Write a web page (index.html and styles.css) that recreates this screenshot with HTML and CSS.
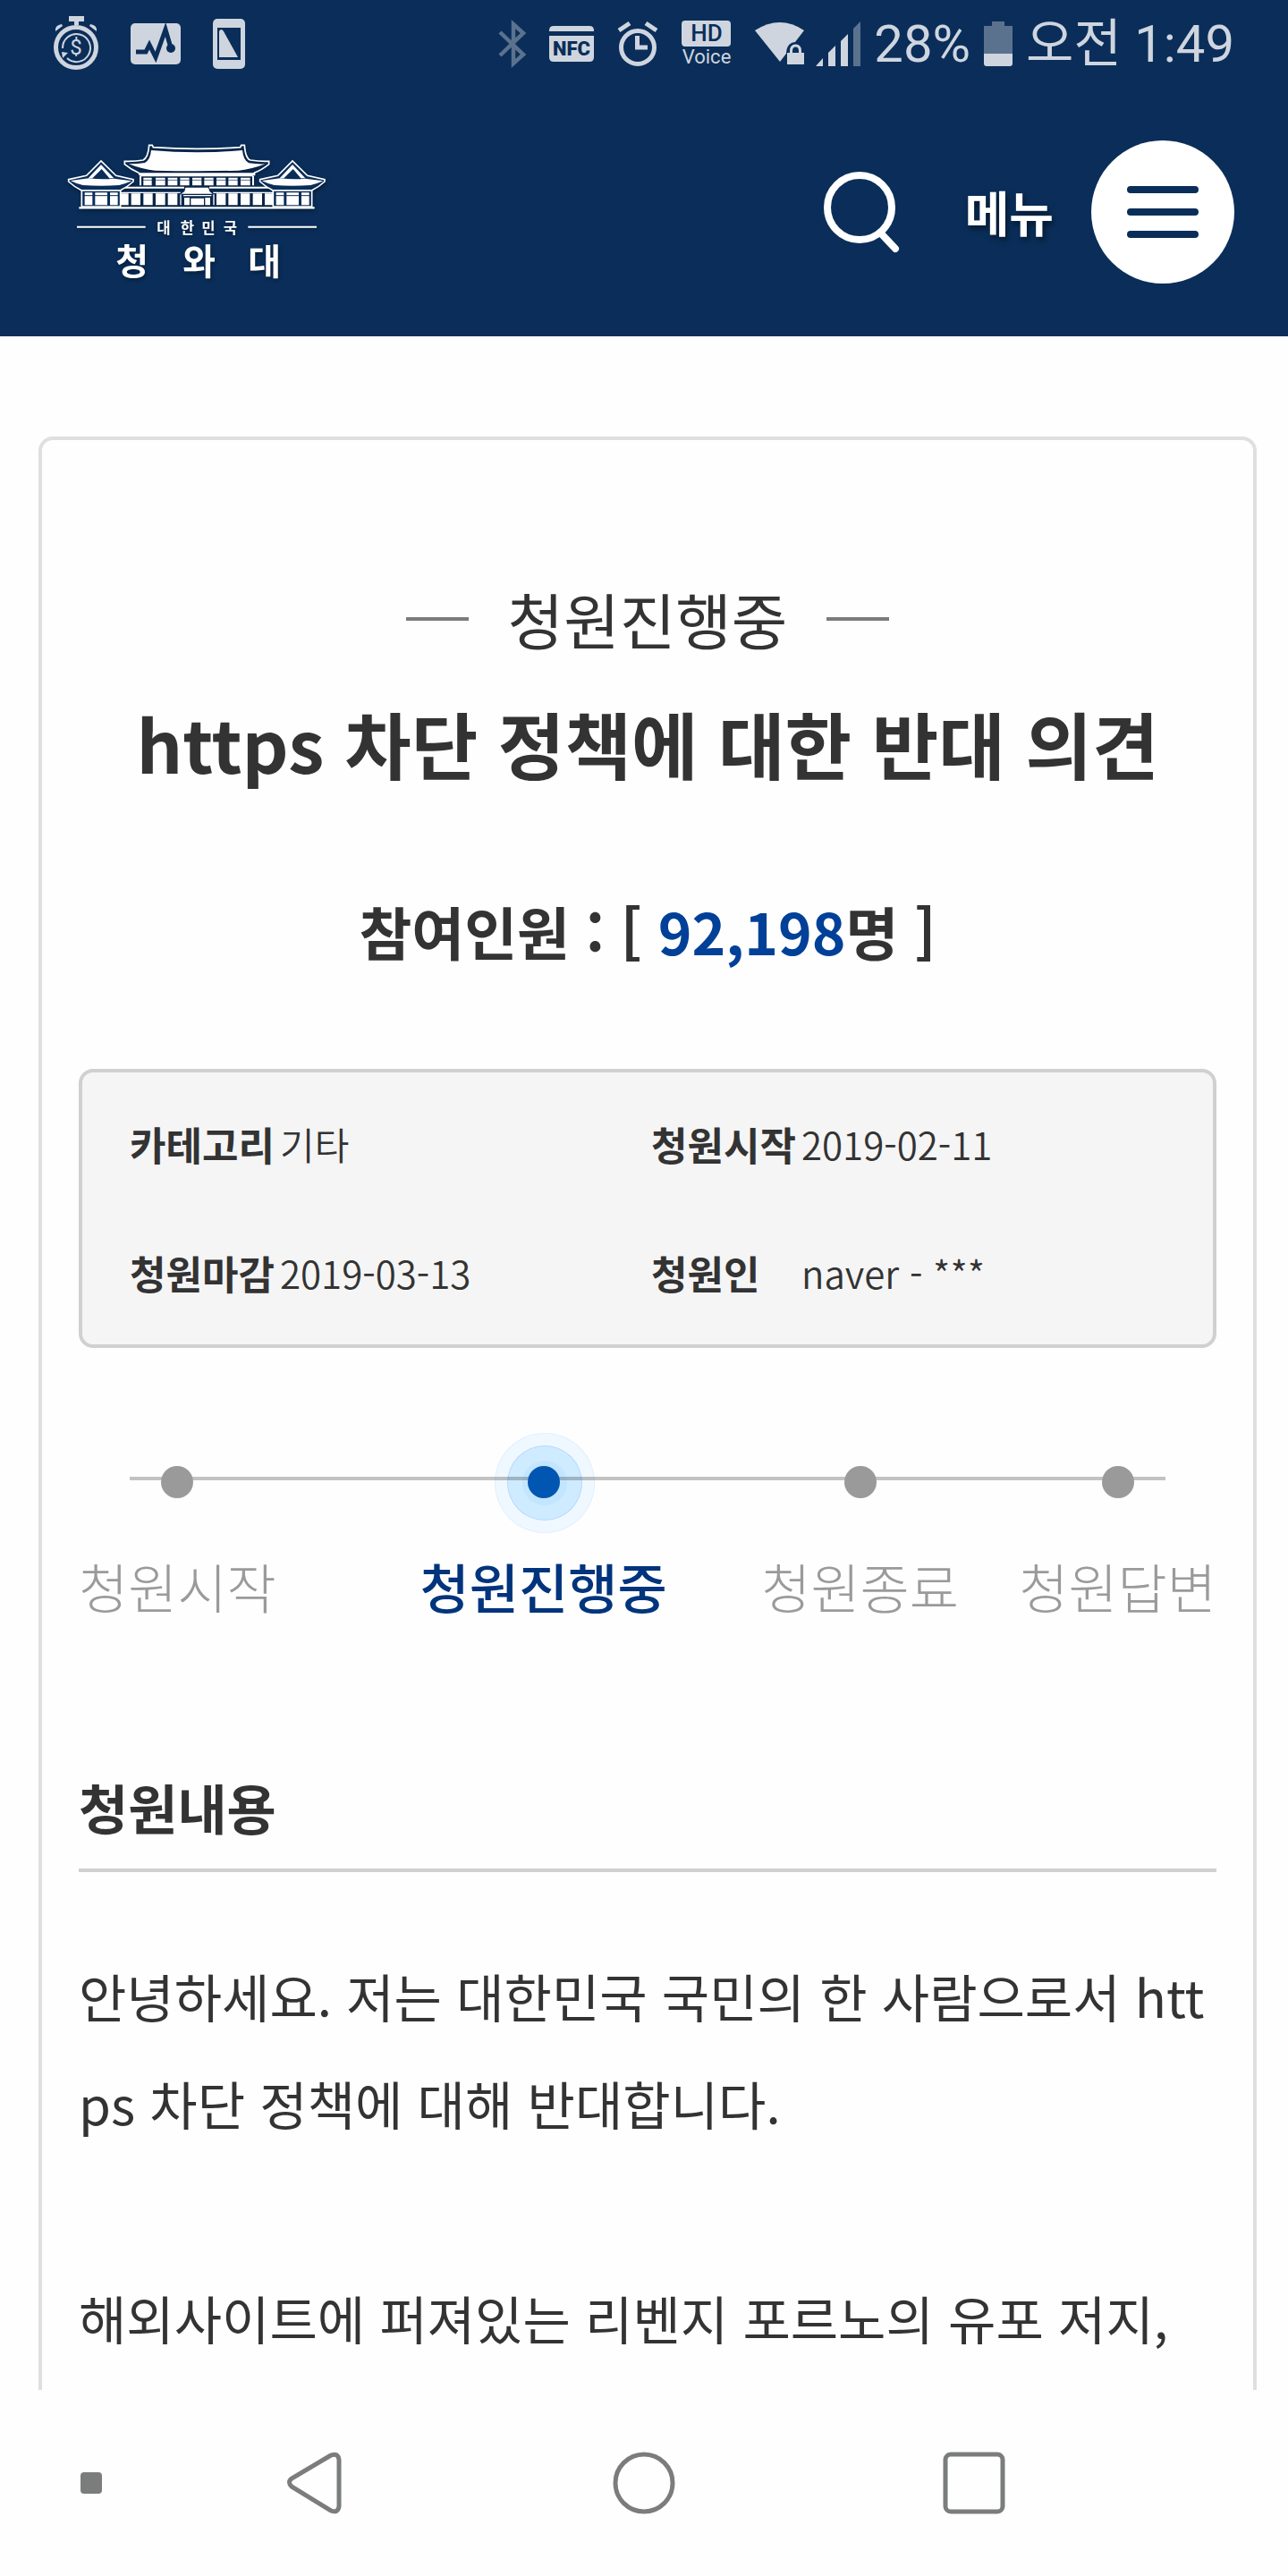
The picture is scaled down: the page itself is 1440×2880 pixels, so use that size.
FILE: index.html
```html
<!DOCTYPE html>
<html lang="ko">
<head>
    <meta charset="UTF-8">
    <meta name="viewport" content="width=device-width, initial-scale=1.0">
    <title>https 차단 정책에 대한 반대 의견</title>
    <link rel="stylesheet" href="styles.css">
</head>
<body>
    <header class="top">
        <!-- Status bar -->
        <div class="status-bar">
            <div class="status-left">
                <svg width="50" height="62" viewBox="0 0 50 62">
                    <path d="M17 0h17v6h-6v4h-5V6h-6z" fill="#cfd5df"/>
                    <path d="M2 17q-1-7 7-8l1 2zM48 17q1-7-7-8l-1 2z" fill="#cfd5df"/>
                    <circle cx="25" cy="35" r="22.500" fill="none" stroke="#cfd5df" stroke-width="5"/>
                    <path d="M10 36a15.500 15.500 0 1 1 5 11" fill="none" stroke="#cfd5df" stroke-width="2"/>
                    <path d="M9 40l7 1-6 6z" fill="#cfd5df"/>
                    <text x="25" y="43" class="coin">$</text>
                </svg>
                <svg width="56" height="46" viewBox="0 0 56 46">
                    <rect width="56" height="46" rx="5" fill="#cfd5df"/>
                    <path d="M6 32h11l4-8 7 14L39 7l5 17" fill="none" stroke="#0a2e59" stroke-width="5"/>
                    <circle cx="45" cy="28" r="5" fill="#0a2e59"/>
                </svg>
                <svg width="36" height="56" viewBox="0 0 36 56">
                    <rect width="36" height="56" rx="5" fill="#cfd5df"/>
                    <path d="M5 10h26v36H5z" fill="#0a2e59"/>
                    <path d="M7 43V14q2-4 5 0l16 29z" fill="#cfd5df"/>
                </svg>
            </div>
            <div class="status-right">
                <div class="status-icons">
                    <svg width="30" height="50" viewBox="0 0 30 50">
                        <path d="M1 12l26 25-11 10V3l11 10L1 38" fill="none" stroke="#5b728f" stroke-width="4.500"/>
                    </svg>
                    <svg width="50" height="40" viewBox="0 0 50 40">
                        <path d="M0 6V5q0-5 5-5h40q5 0 5 5v1zM0 11h50v24q0 5-5 5H5q-5 0-5-5z" fill="#cfd5df"/>
                        <text x="25" y="33" class="nfc">NFC</text>
                    </svg>
                    <svg width="46" height="50" viewBox="0 0 46 50">
                        <circle cx="23" cy="29" r="18.500" fill="none" stroke="#cfd5df" stroke-width="5"/>
                        <path d="M2 10L14 2M44 10L32 2" fill="none" stroke="#cfd5df" stroke-width="5"/>
                        <path d="M22.500 16v13H34" fill="none" stroke="#cfd5df" stroke-width="5"/>
                    </svg>
                    <svg width="56" height="60" viewBox="0 -4 56 60">
                        <rect width="55" height="29" rx="4" fill="#cfd5df"/>
                        <text x="28" y="23" class="hd">HD</text>
                        <text x="28" y="48" class="voice">Voice</text>
                    </svg>
                    <svg width="56" height="48" viewBox="0 0 56 48">
                        <path d="M0 9Q28-9 55 9L28 44z" fill="#cfd5df"/>
                        <path d="M35 48V34q1-12 11-12t11 12v14z" fill="#0a2e59"/>
                        <path d="M36 34h19v13H36z" fill="#cfd5df"/>
                        <path d="M40.500 36v-4q0-6 5-6t5 6v4" fill="none" stroke="#cfd5df" stroke-width="3"/>
                    </svg>
                </div>
                <div class="status-text">
                    <svg width="50" height="50" viewBox="0 0 50 50">
                        <path d="M0 50l8-9v9zM14 50V35l8-8v23zM28 50V22l8-8v36z" fill="#cfd5df"/>
                        <path d="M42 50V8l8-8v50z" fill="#5b728f"/>
                    </svg>
                    <span>28%</span>
                    <svg width="32" height="50" viewBox="0 0 32 50">
                        <path d="M0 5h9V0h14v5h9v32H0z" fill="#5b728f"/>
                        <path d="M0 36h32v11q0 3-3 3H3q-3 0-3-3z" fill="#cfd5df"/>
                    </svg>
                    <span>오전 1:49</span>
                </div>
            </div>
        </div>

        <!-- Site header -->
        <div class="site-header">
            <a href="#" class="logo" aria-label="대한민국 청와대">
                <svg width="290" height="165" viewBox="225 463 870 495">
                    <!-- main roof -->
                    <path d="M507 502q153 14 306 0q3 34 22 43q25 4 55 3q-50 19-90 22q-140 3-280 0q-40-3-88-22q30 0 54-4q18-10 21-42z" fill="#fff"/>
                    <path d="M500 485h11l3 7q146 10 292 0l3-7h11q3 45 20 50q30 5 62 4v10q-25 20-48 28l-8 10H474l-10-10q-24-10-46-28v-10q35 1 62-4q17-8 20-50z" fill="none" stroke="#fff" stroke-width="5"/>
                    <path d="M466 578h390v9H466z" fill="#fff"/>
                    <!-- upper windows -->
                    <path d="M471 588v32M849 588v32" stroke="#fff" stroke-width="6"/>
                    <path d="M481 594h28v26h-28zM522 594h32v26h-32zM563 594h32v26h-32zM604 594h31v26h-31zM645 594h31v26h-31zM685 594h31v26h-31zM726 594h31v26h-31zM766 594h31v26h-31zM807 594h32v26h-32z" fill="#fff"/>
                    <path d="M478 602h363" stroke="#0a2e59" stroke-width="2"/>
                    <path d="M410 627h208M702 627h208" stroke="#fff" stroke-width="6"/>
                    <!-- lower wall -->
                    <path d="M405 644h200M715 644h200" stroke="#fff" stroke-width="4"/>
                    <path d="M405 647h26v39h-26zM440 647h31v39h-31zM481 647h31v39h-31zM522 647h32v39h-32zM563 647h32v39h-32zM726 647h31v39h-31zM766 647h31v39h-31zM807 647h31v39h-31zM848 647h31v39h-31zM888 647h27v39h-27z" fill="#fff"/>
                    <!-- entrance -->
                    <path d="M622 627h77l4 13 10 8H607l12-8z" fill="#fff"/>
                    <path d="M606 650v36M717 650v36M615 654h94" stroke="#fff" stroke-width="4"/>
                    <path d="M618 661h18v25h-18zM640 663h44v23h-44zM688 661h17v25h-17z" fill="#fff"/>
                    <!-- side pavilions -->
                    <g id="pavilion">
                        <path d="M230 600l60-13 49-49 50 49 58 13v7q-22 20-44 30H274q-22-10-44-30z" fill="#0a2e59" stroke="#fff" stroke-width="5"/>
                        <path d="M236 604l62-8q43 5 84 1l60 8q-20 9-42 14q-60 5-122 0q-22-5-42-15z" fill="#fff"/>
                        <path d="M296 596l43-46 43 46h-15l-26-31-31 31z" fill="#fff"/>
                        <path d="M274 637h130v54H274z" fill="#0a2e59" stroke="#fff" stroke-width="5"/>
                        <path d="M284 644h26v42h-26zM319 644h41v42h-41zM369 644h26v42h-26z" fill="#fff"/>
                        <path d="M280 654h118" stroke="#0a2e59" stroke-width="3"/>
                    </g>
                    <use href="#pavilion" x="642"/>
                    <path d="M265 695h790" stroke="#fff" stroke-width="7"/>
                    <path d="M258 759h230M832 759h230" stroke="#fff" stroke-width="6"/>
                    <g class="logo-small">
                        <text x="549" y="780">대</text>
                        <text x="628" y="780">한</text>
                        <text x="699" y="780">민</text>
                        <text x="772" y="780">국</text>
                    </g>
                    <g class="logo-large">
                        <text x="443" y="920">청</text>
                        <text x="668" y="920">와</text>
                        <text x="887" y="920">대</text>
                    </g>
                </svg>
            </a>
            <div class="header-buttons">
                <button type="button" class="search-button" aria-label="검색">
                    <svg width="84" height="92" viewBox="0 0 84 92">
                        <circle cx="40" cy="41" r="36" fill="none" stroke="#fff" stroke-width="8"/>
                        <path d="M64 70l16 17" stroke="#fff" stroke-width="8" stroke-linecap="round"/>
                    </svg>
                </button>
                <button type="button" class="menu-button">
                    <span class="menu-label">메뉴</span>
                    <span class="menu-circle">
                        <svg width="80" height="58" viewBox="0 0 80 58">
                            <path d="M4 4h72M4 29h72M4 54h72" stroke="#0a2e59" stroke-width="8" stroke-linecap="round"/>
                        </svg>
                    </span>
                </button>
            </div>
        </div>
    </header>

    <main class="petition">
        <p class="petition-status">청원진행중</p>
        <h1>https 차단 정책에 대한 반대 의견</h1>
        <p class="count">참여인원 : [ <span class="number">92,198</span>명 ]</p>

        <dl class="info">
            <div><dt>카테고리</dt><dd>기타</dd></div>
            <div><dt>청원시작</dt><dd>2019-02-11</dd></div>
            <div><dt>청원마감</dt><dd>2019-03-13</dd></div>
            <div><dt>청원인</dt><dd>naver - ***</dd></div>
        </dl>

        <ol class="steps">
            <li>청원시작</li>
            <li class="active">청원진행중</li>
            <li>청원종료</li>
            <li>청원답변</li>
        </ol>

        <h2>청원내용</h2>
        <div class="content">
            안녕하세요. 저는 대한민국 국민의 한 사람으로서 https 차단 정책에 대해 반대합니다.<br>
            <br>
            해외사이트에 퍼져있는 리벤지 포르노의 유포 저지,
        </div>
    </main>

    <!-- Navigation bar -->
    <nav class="nav-bar">
        <button type="button" aria-label="고정">
            <svg width="24" height="24" viewBox="0 0 24 24"><rect width="24" height="24" rx="4" fill="#7b7d7c"/></svg>
        </button>
        <button type="button" aria-label="뒤로">
            <svg width="62" height="70" viewBox="0 0 62 70">
                <path d="M50 4L6 30q-5 4 0 9l44 27q8 3 9-5V9q-1-8-9-5z" fill="none" stroke="#7b7d7c" stroke-width="5"/>
            </svg>
        </button>
        <button type="button" aria-label="홈">
            <svg width="70" height="70" viewBox="0 0 70 70"><circle cx="35" cy="35" r="32" fill="none" stroke="#7b7d7c" stroke-width="5"/></svg>
        </button>
        <button type="button" aria-label="최근 앱">
            <svg width="70" height="70" viewBox="0 0 70 70"><rect x="3" y="3" width="64" height="64" rx="6" fill="none" stroke="#7b7d7c" stroke-width="5"/></svg>
        </button>
    </nav>
</body>
</html>
```
FILE: styles.css
```css
* {
    box-sizing: border-box;
}
body {
    margin: 0;
    min-height: 100vh;
    display: flex;
    flex-direction: column;
    font-family: "Noto Sans CJK KR", sans-serif;
    color: #333;
    background-color: #fefefe;
}
svg {
    display: block;
    flex: none;
    overflow: visible;
}
button {
    padding: 0;
    border: none;
    background: none;
    font-family: inherit;
    cursor: pointer;
}
p, h1, h2, dl, dd, ol {
    margin: 0;
    padding: 0;
}

.top {
    background-color: #0a2e59;
    color: #fff;
}
.status-bar {
    display: flex;
    justify-content: space-between;
    align-items: center;
    height: 98px;
    padding: 0 60px;
    color: #cfd5df;
    font-family: Roboto, "Noto Sans CJK KR", sans-serif;
    font-size: 58px;
    line-height: 64px;
}
.status-left {
    display: flex;
    align-items: center;
    gap: 36px;
}
.status-right {
    display: flex;
    align-items: center;
    gap: 12px;
}
.status-icons {
    display: flex;
    align-items: center;
    gap: 26px;
}
.status-text {
    display: flex;
    align-items: center;
    gap: 15px;
}
.coin, .nfc, .hd, .voice {
    text-anchor: middle;
}
.coin {
    font-size: 24px;
    fill: #cfd5df;
}
.nfc {
    font-size: 22px;
    font-weight: 900;
    fill: #0a2e59;
}
.hd {
    font-size: 26px;
    font-weight: 500;
    fill: #0a2e59;
}
.voice {
    font-size: 22px;
    fill: #cfd5df;
}

.site-header {
    display: flex;
    justify-content: space-between;
    align-items: center;
    height: 278px;
    padding: 0 60px 0 75px;
}
.logo svg {
    filter: drop-shadow(1px 2px 2px rgba(0, 0, 0, 0.4));
}
.logo-small, .logo-large {
    fill: #fff;
    font-weight: bold;
    text-anchor: middle;
}
.logo-small {
    font-size: 50px;
}
.logo-large {
    font-size: 120px;
}
.header-buttons {
    display: flex;
    align-items: center;
    gap: 74px;
}
.menu-button {
    display: flex;
    align-items: center;
    gap: 42px;
    color: #fff;
}
.menu-label {
    font-size: 54px;
    font-weight: bold;
    line-height: 80px;
    text-shadow: 2px 4px 6px rgba(0, 0, 0, 0.5);
}
.menu-circle {
    display: flex;
    align-items: center;
    justify-content: center;
    width: 160px;
    height: 160px;
    border-radius: 50%;
    background-color: #fff;
}

.petition {
    flex: 1;
    margin: 112px 35px 0 43px;
    padding: 150px 41px 16px;
    border: 4px solid #dfdfdf;
    border-bottom: none;
    border-radius: 16px 16px 0 0;
}
.petition-status {
    display: flex;
    align-items: center;
    justify-content: center;
    gap: 44px;
    font-size: 68px;
    line-height: 100px;
}
.petition-status::before, .petition-status::after {
    content: "";
    width: 70px;
    height: 4px;
    background-color: #7b7b7b;
}
h1 {
    margin-top: 28px;
    font-size: 81px;
    line-height: 120px;
    text-align: center;
}
.count {
    margin-top: 100px;
    font-size: 64px;
    font-weight: bold;
    line-height: 100px;
    text-align: center;
}
.number {
    color: #004098;
}

.info {
    display: grid;
    grid-template-columns: 1fr 1fr;
    row-gap: 80px;
    margin-top: 105px;
    padding: 48px 45px 48px 53px;
    border: 4px solid #d0d0d0;
    border-radius: 16px;
    background-color: #f5f5f5;
    font-size: 42px;
    line-height: 64px;
}
.info div {
    display: flex;
    align-items: center;
}
.info dt {
    width: 168px;
    font-size: 44px;
    font-weight: bold;
}
.info dd {
    font-weight: 350;
}

.steps {
    position: relative;
    display: grid;
    grid-template-columns: 30% 30% 1fr auto;
    justify-items: start;
    margin-top: 132px;
    list-style: none;
    font-size: 60px;
    font-weight: 300;
    line-height: 84px;
    color: #9a9a9a;
}
/* line behind the dots */
.steps::before {
    content: "";
    position: absolute;
    z-index: 1;
    top: 12px;
    left: 57px;
    right: 57px;
    height: 4px;
    background-color: rgba(0, 0, 0, 0.23);
}
.steps li {
    position: relative;
    white-space: nowrap;
}
.steps li::before {
    content: "";
    position: relative;
    z-index: 2;
    display: block;
    width: 36px;
    height: 36px;
    margin: 0 auto 56px;
    border-radius: 50%;
    background-color: #9a9a9a;
}
.steps .active {
    font-weight: 500;
    color: #00347c;
}
.steps .active::before {
    background-color: #0056b1;
}
.steps .active::after {
    content: "";
    position: absolute;
    top: -6px;
    left: calc(50% - 24px);
    width: 50px;
    height: 50px;
    border-radius: 50%;
    background-color: #c4e5ff;
    box-shadow: 0 0 0 16px #ceebff, 0 0 0 17px #b5d9ff, 0 0 0 30px #f0f8ff, 0 0 0 31px #e0efff;
}

h2 {
    margin-top: 163px;
    padding-bottom: 27px;
    border-bottom: 4px solid #d0d0d0;
    font-size: 60px;
    line-height: 84px;
}
.content {
    margin-top: 78px;
    font-size: 58px;
    line-height: 120px;
    word-break: break-all;
}

.nav-bar {
    display: grid;
    grid-template-columns: 34fr 49fr 74fr 49fr 34fr;
    height: 208px;
}
.nav-bar button {
    display: flex;
    align-items: center;
    justify-content: center;
}
```
